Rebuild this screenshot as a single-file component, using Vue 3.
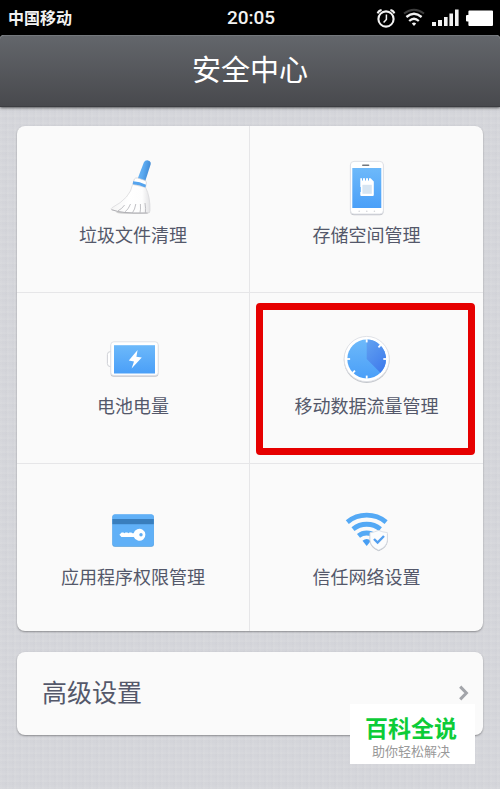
<script setup>
const features = [
  { id: 'clean', label: '垃圾文件清理' },
  { id: 'storage', label: '存储空间管理' },
  { id: 'battery', label: '电池电量' },
  { id: 'traffic', label: '移动数据流量管理', highlighted: true },
  { id: 'permission', label: '应用程序权限管理' },
  { id: 'network', label: '信任网络设置' },
]
const ticks = [0, 45, 90, 180, 225, 270]
</script>

<template>
  <div class="page">
    <div class="status">
      <span class="carrier">中国移动</span>
      <span class="time">20:05</span>
      <div class="indicators">
        <svg width="20" height="20" viewBox="0 0 20 20" fill="none" stroke="#f2f2f2">
          <circle cx="10" cy="11" r="7.6" stroke-width="2.1" />
          <path d="M10.4 6.5V11.4L7.6 14.4" stroke-width="1.5" />
          <path d="M1.6 5.4Q2.6 2.6 5.6 2M18.4 5.4Q17.4 2.6 14.4 2" stroke-width="2" />
        </svg>
        <svg width="22" height="20" viewBox="0 0 22 20" fill="none" stroke="#f2f2f2">
          <path d="M1 5.5Q11-2 21 5.5" stroke="#3c3c3c" stroke-width="2" />
          <path d="M3.4 9Q11 2.6 18.6 9" stroke-width="2.3" />
          <path d="M6.2 13Q11 8.6 15.8 13" stroke-width="2.3" />
          <path d="M8.8 15.4Q11 13.8 13.2 15.4L11 18Z" fill="#f2f2f2" stroke="none" />
        </svg>
        <svg width="27" height="20" viewBox="0 0 27 20" fill="#f2f2f2">
          <path d="M0 14h4v4H0zM6 12h4v6H6zM12 9h3.6v9H12zM17.4 5.5H21V18h-3.6zM23 1.5h3.6V18H23z" />
        </svg>
        <svg width="28" height="20" viewBox="0 0 28 20" fill="#fff">
          <path d="M3.4 2.5H26Q27 2.5 27 3.5V17Q27 18 26 18H3.4Q2.4 18 2.4 17V13.5H1Q0 13.5 0 12.5V8Q0 7 1 7H2.4V3.5Q2.4 2.5 3.4 2.5Z" />
        </svg>
      </div>
    </div>

    <header class="header">
      <h1>安全中心</h1>
    </header>

    <main class="content">
      <section class="card grid">
        <button
          v-for="item in features"
          :key="item.id"
          type="button"
          class="cell"
          :class="{ highlighted: item.highlighted }"
        >
          <svg v-if="item.id === 'clean'" class="icon" viewBox="0 0 60 60">
            <defs>
              <linearGradient id="handle" x1="0" x2="1" y1="0" y2="0.3">
                <stop offset="0" stop-color="#72b9f5" />
                <stop offset="0.55" stop-color="#5aa9f0" />
                <stop offset="1" stop-color="#4088d2" />
              </linearGradient>
              <linearGradient id="bristle" x1="0" x2="1" y1="0" y2="0">
                <stop offset="0" stop-color="#f4f4f4" />
                <stop offset="0.45" stop-color="#ffffff" />
                <stop offset="0.8" stop-color="#fdfdfd" />
                <stop offset="1" stop-color="#e2e2e4" />
              </linearGradient>
            </defs>
            <ellipse cx="30" cy="54.6" rx="17" ry="1.2" fill="#a8a8a8" opacity="0.6" />
            <path d="M40.8 4.6Q42 2 45 2.4Q48.4 3.2 47.6 6.4L42 24L34.2 22Z" fill="url(#handle)" />
            <path d="M31.4 21Q32.4 19.6 34.6 20L42 22.4Q43.8 23.4 43.4 25L42.6 29L29.8 26Z" fill="#fff" stroke="#cfcfd2" stroke-width="0.7" />
            <path d="M29.6 26.4Q27.4 40 9.2 49.6Q7.2 50.8 8.6 51.8Q15.4 54.2 21 54.4L31 55.1H44.8Q47 55 47 52.5Q47.4 39 42.6 29.4Z" fill="url(#bristle)" stroke="#d5d5d8" stroke-width="0.7" />
            <path d="M30.2 23.2Q36.8 23.6 43 26.8L42.4 29.6Q36.4 26.4 29.8 26.2Z" fill="#55a4ee" />
            <path d="M21.6 47Q18.8 51 15 52.8M27.5 46Q25.4 51.6 22 53.8M32.8 46Q31.8 51.8 29.6 54.5M37.4 46Q37.8 52 37 54.7M42 45Q43 51 42.4 54.7" fill="none" stroke="#b9b9bd" stroke-width="0.9" />
            <path d="M8.6 51.7Q15.4 54 21 54.4L31 55H44.6" fill="none" stroke="#a5a5aa" stroke-width="0.8" />
          </svg>

          <svg v-else-if="item.id === 'storage'" class="icon" viewBox="0 0 60 60">
            <defs>
              <linearGradient id="screen" x1="0" x2="0" y1="0" y2="1">
                <stop offset="0" stop-color="#6db9fa" />
                <stop offset="1" stop-color="#4a9ff8" />
              </linearGradient>
            </defs>
            <rect x="13.2" y="4.2" width="33.4" height="53" rx="4" fill="#c2c4ca" />
            <rect x="13.4" y="3.4" width="33" height="52.6" rx="3.6" fill="#fff" stroke="#dcdfe4" stroke-width="0.9" />
            <rect x="25" y="6.4" width="7.4" height="1.7" rx="0.8" fill="#71767e" />
            <rect x="15.3" y="10" width="29" height="40" fill="url(#screen)" />
            <path d="M23.3 20.3H25V22.4H26V20.3H28V22.4H29V20.3H31V22.4H32V20.3H33.6L36.8 23.5V37Q36.8 38 35.8 38H24.3Q23.3 38 23.3 37V34H23.8V29H23.3Z" fill="#fff" />
            <rect x="25.4" y="26.8" width="9.4" height="9" fill="#d7e5f2" />
            <g fill="#d4d6da">
              <circle cx="22.2" cy="53.2" r="0.8" />
              <circle cx="29.8" cy="53.2" r="0.8" />
              <circle cx="37.4" cy="53.2" r="0.8" />
            </g>
          </svg>

          <svg v-else-if="item.id === 'battery'" class="icon" viewBox="0 0 60 60">
            <rect x="4.4" y="22.6" width="8" height="15" rx="3" fill="#fff" stroke="#cfd1d6" />
            <rect x="7.6" y="14" width="47.8" height="33.8" rx="3" fill="#c2c4ca" />
            <rect x="7.8" y="12.8" width="47.4" height="33.6" rx="3" fill="#fff" stroke="#dcdfe4" stroke-width="0.9" />
            <rect x="11" y="16.2" width="41" height="28.3" fill="url(#screen)" />
            <path d="M34.6 21L25.8 31.6L31 32.4L28.6 39.6L38.8 28.6L33.4 27.8Z" fill="#fff" />
          </svg>

          <svg v-else-if="item.id === 'traffic'" class="icon" viewBox="0 0 60 60">
            <defs>
              <linearGradient id="wedge" x1="0" x2="0.6" y1="0" y2="1">
                <stop offset="0" stop-color="#62a2f1" />
                <stop offset="1" stop-color="#427eec" />
              </linearGradient>
            </defs>
            <circle cx="29.7" cy="31" r="22.9" fill="#c3c6cb" />
            <circle cx="29.7" cy="30" r="22.6" fill="#fff" stroke="#dcdfe4" stroke-width="0.9" />
            <circle cx="29.7" cy="30" r="19.4" fill="url(#screen)" />
            <path d="M29.7 30V10.6A19.4 19.4 0 0 1 43.4 43.7Z" fill="url(#wedge)" />
            <line
              v-for="angle in ticks"
              :key="angle"
              x1="29.7"
              y1="10.2"
              x2="29.7"
              y2="13.4"
              stroke="#fff"
              stroke-width="1.8"
              :transform="`rotate(${angle} 29.7 30)`"
            />
          </svg>

          <svg v-else-if="item.id === 'permission'" class="icon" viewBox="0 0 60 60">
            <rect x="9.4" y="14.8" width="41.4" height="32" rx="2.5" fill="#4b9adb" />
            <rect x="9.4" y="14.3" width="41.4" height="31.7" rx="2.5" fill="#60b0f7" />
            <rect x="9.4" y="19" width="41.4" height="5.2" fill="#397ebd" />
            <path d="M16.4 34.8L18.6 32.4H20.4L21.4 33.2L22.4 32.4H24.4L25.4 33.2L26.4 32.4H28.4L29.4 33.2H30.6A6 6 0 1 1 30.8 37H18.4Z" fill="#fff" />
            <circle cx="38" cy="34.7" r="1.7" fill="#60adf2" />
          </svg>

          <svg v-else class="icon" viewBox="0 0 60 60">
            <g fill="none" stroke="#54a9f5" stroke-width="4.8">
              <path d="M10.3 22.1A30.8 30.8 0 0 1 49.1 22.1" />
              <path d="M16 29.1A21.7 21.7 0 0 1 43.4 29.1" />
              <path d="M21.5 35.9A13 13 0 0 1 37.9 35.9" />
            </g>
            <path d="M25.5 40.8A6.7 6.7 0 0 1 33.9 40.8L29.7 46Z" fill="#479ef3" />
            <path d="M41.7 31.2L50.8 34V41Q50 48 41.7 51.3Q33.4 48 32.6 41V34Z" fill="#b9bdc5" />
            <path d="M41.7 30.4Q45.6 32.2 50.4 32.6V40Q50 46.8 41.7 50.2Q33.4 46.8 33 40V32.6Q37.8 32.2 41.7 30.4Z" fill="#fbfcfd" stroke="#d5dae2" stroke-width="0.8" />
            <path d="M37 39L40.6 42.6L47 36" fill="none" stroke="#529ff0" stroke-width="2.4" />
          </svg>
          <span class="label">{{ item.label }}</span>
        </button>
      </section>

      <button type="button" class="card advanced">
        <span class="advanced-label">高级设置</span>
        <svg width="10" height="16" viewBox="0 0 10 16" fill="none" stroke="#a3a5aa" stroke-width="3">
          <path d="M1.2 1.6L7.4 8L1.2 14.4" />
        </svg>
      </button>
    </main>

    <aside class="watermark">
      <strong>百科全说</strong>
      <span>助你轻松解决</span>
    </aside>
  </div>
</template>

<style>
body {
  margin: 0;
  background: #000;
}
</style>

<style scoped>
.page {
  position: relative;
  box-sizing: border-box;
  min-height: 100vh;
  font-family: "Noto Sans CJK SC", sans-serif;
  color: #54586a;
  background:
    repeating-linear-gradient(90deg, rgba(255, 255, 255, 0.04) 0 2px, transparent 2px 5px, rgba(90, 90, 110, 0.01) 5px 7px),
    repeating-linear-gradient(0deg, rgba(255, 255, 255, 0.04) 0 2px, transparent 2px 4px, rgba(90, 90, 110, 0.01) 4px 7px),
    #d5d6db;
}

.status {
  display: grid;
  grid-template-columns: 1fr auto 1fr;
  align-items: center;
  height: 35px;
  padding: 0 6px 0 8px;
  color: #f2f2f2;
  background: #000;
}

.carrier {
  padding-bottom: 2px;
  font-size: 16px;
  line-height: 24px;
  font-weight: 700;
}

.time {
  font-family: Roboto, "Liberation Sans", sans-serif;
  font-size: 19px;
  line-height: 24px;
  font-weight: 500;
}

.indicators {
  display: flex;
  justify-content: flex-end;
  gap: 7px;
}

.header {
  display: flex;
  align-items: center;
  justify-content: center;
  box-sizing: border-box;
  height: 72px;
  padding-bottom: 6px;
  border-top: 1px solid #74787d;
  border-bottom: 1px solid #3d3e42;
  border-radius: 4px 4px 0 0;
  background: linear-gradient(#63666b, #48494d);
  box-shadow: 0 -4px 0 #000, 0 1px 3px rgba(0, 0, 0, 0.6);
}

h1 {
  margin: 0;
  font-size: 29px;
  line-height: 40px;
  font-weight: 400;
  color: #fff;
}

.content {
  display: flex;
  flex-direction: column;
  gap: 21px;
  padding: 19px 17px 54px;
}

.card {
  border-radius: 8px;
  background: #fafafa;
  box-shadow: 0 1px 2px rgba(0, 0, 0, 0.35);
}

.grid {
  display: grid;
  grid-template-columns: 1fr 1fr;
}

button {
  border: 0;
  font: inherit;
  color: inherit;
  cursor: pointer;
}

.cell {
  position: relative;
  display: flex;
  flex-direction: column;
  align-items: center;
  gap: 4px;
  padding: 36px 0 46px;
  border-bottom: 1px solid #e6e6e8;
  background: none;
}

.cell:nth-child(odd) {
  border-right: 1px solid #e6e6e8;
}

.cell:nth-child(-n + 2) {
  padding-top: 32px;
}

.cell:nth-last-child(-n + 2) {
  padding-bottom: 43px;
  border-bottom: 0;
}

.highlighted::after {
  content: "";
  position: absolute;
  inset: 10px 8px 8px 6px;
  border: 7px solid #e60000;
  border-radius: 4px;
}

.icon {
  width: 60px;
  height: 60px;
}

.label {
  font-size: 18px;
  line-height: 24px;
}

.advanced {
  display: flex;
  align-items: center;
  justify-content: space-between;
  padding: 19px 14px 20px 25px;
}

.advanced-label {
  padding-bottom: 4px;
  font-size: 25px;
  line-height: 40px;
}

.watermark {
  position: absolute;
  right: 25px;
  bottom: 25px;
  display: flex;
  flex-direction: column;
  align-items: center;
  padding: 7px 18px 5px 15px;
  background: #fff;
}

.watermark strong {
  font-size: 23px;
  line-height: 32px;
  font-weight: 700;
  color: #0dcc38;
}

.watermark span {
  font-size: 13px;
  line-height: 16px;
  color: #999;
}
</style>
